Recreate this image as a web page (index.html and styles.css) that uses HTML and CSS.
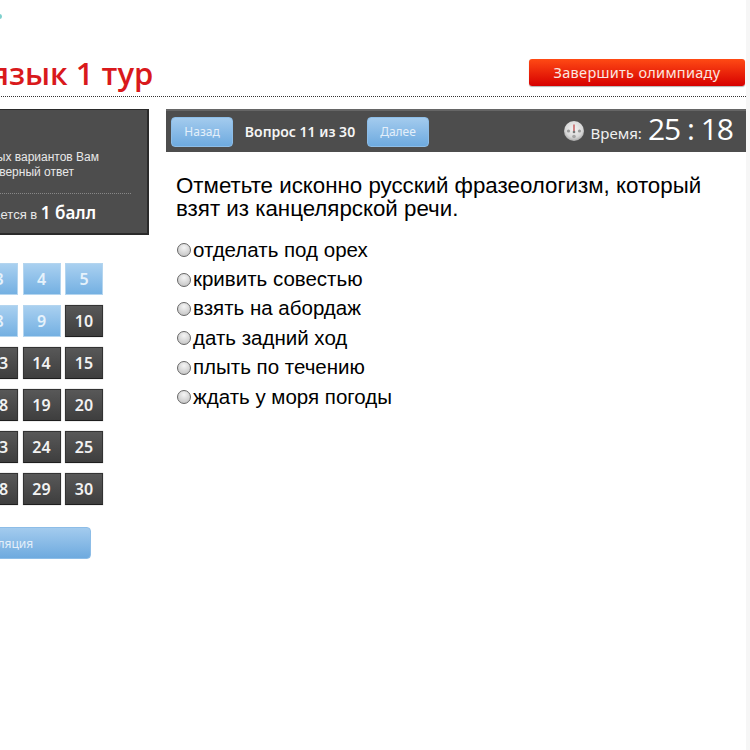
FILE: index.html
```html
<!DOCTYPE html>
<html lang="ru">
<head>
<meta charset="utf-8">
<title>Олимпиада</title>
<link rel="stylesheet" href="styles.css">
</head>
<body>
<div class="page">
  <div class="inner">
    <header class="header">
      <div class="logo-row"><span class="logo-mark"></span></div>
      <div class="title-row">
        <h1 class="title">Русский язык 1 тур</h1>
        <a class="finish">Завершить олимпиаду</a>
      </div>
    </header>
    <div class="columns">
      <aside class="sidebar">
        <div class="info">
          <p class="info-line line-a">Из предложенных вариантов Вам</p>
          <p class="info-line line-b">нужно выбрать один верный ответ</p>
          <div class="info-rule"></div>
          <p class="score">Вопрос оценивается в <b>1 балл</b></p>
        </div>
        <div class="grid">
          <a class="cell done">1</a><a class="cell done">2</a><a class="cell done">3</a><a class="cell done">4</a><a class="cell done">5</a>
          <a class="cell done">6</a><a class="cell done">7</a><a class="cell done">8</a><a class="cell done">9</a><a class="cell">10</a>
          <a class="cell">11</a><a class="cell">12</a><a class="cell">13</a><a class="cell">14</a><a class="cell">15</a>
          <a class="cell">16</a><a class="cell">17</a><a class="cell">18</a><a class="cell">19</a><a class="cell">20</a>
          <a class="cell">21</a><a class="cell">22</a><a class="cell">23</a><a class="cell">24</a><a class="cell">25</a>
          <a class="cell">26</a><a class="cell">27</a><a class="cell">28</a><a class="cell">29</a><a class="cell">30</a>
        </div>
        <a class="btn appeal">Апелляция</a>
      </aside>
      <main class="main">
        <div class="bar">
          <a class="btn nav">Назад</a>
          <span class="counter">Вопрос 11 из 30</span>
          <a class="btn nav">Далее</a>
          <div class="timer">
            <svg class="clock" viewBox="0 0 20 20" width="20" height="20" aria-hidden="true">
              <defs><radialGradient id="face" cx="50%" cy="40%" r="60%"><stop offset="0" stop-color="#f4f4f4"/><stop offset="0.7" stop-color="#d8d8d8"/><stop offset="1" stop-color="#a8a8a8"/></radialGradient></defs>
              <circle cx="10" cy="10" r="10" fill="url(#face)"/>
              <circle cx="4.5" cy="10" r="1.6" fill="#9a9a9a"/>
              <circle cx="15.5" cy="10" r="1.6" fill="#9a9a9a"/>
              <circle cx="10" cy="15.5" r="1.8" fill="#a5a5a5"/>
              <path d="M10 3.5V10" stroke="#c9686a" stroke-width="1.6" fill="none"/>
              <circle cx="10" cy="11" r="1.3" fill="#777"/>
            </svg>
            <span class="time-label">Время:</span>
            <span class="time-value">25 : 18</span>
          </div>
        </div>
        <div class="question">
          <p class="question-text">Отметьте исконно русский фразеологизм, который взят из канцелярской речи.</p>
          <ul class="answers">
            <li class="answer"><span class="radio"></span>отделать под орех</li>
            <li class="answer"><span class="radio"></span>кривить совестью</li>
            <li class="answer"><span class="radio"></span>взять на абордаж</li>
            <li class="answer"><span class="radio"></span>дать задний ход</li>
            <li class="answer"><span class="radio"></span>плыть по течению</li>
            <li class="answer"><span class="radio"></span>ждать у моря погоды</li>
          </ul>
        </div>
      </main>
    </div>
  </div>
  <div class="scrollbar"></div>
</div>
</body>
</html>
```
FILE: styles.css
```css
* { box-sizing: border-box; }
html, body { margin: 0; padding: 0; height: 100%; background: #fff; overflow: hidden; }
body { font-family: "Liberation Sans", Arial, sans-serif; color: #000; }
p, h1, ul { margin: 0; padding: 0; }

.page { display: flex; width: 750px; height: 750px; overflow: hidden; }
.inner { flex: 0 0 866px; min-width: 0; margin-left: -120px; }
.scrollbar { flex: 0 0 4px; background: #f6f6f6; }

.header { height: 97px; border-bottom: 1px dotted #333; padding-top: 14px; }
.logo-row { height: 45px; padding-left: 118px; }
.logo-mark { display: block; width: 4px; height: 5px; background: #5cc4c0; border-radius: 0 3px 3px 0; opacity: .8; }
.title-row { display: flex; justify-content: space-between; align-items: flex-start; padding-right: 1px; }
.title { font-family: "Open Sans", "Noto Sans", sans-serif; font-size: 31px; line-height: 32px; font-weight: 600; color: #d9191c; white-space: nowrap; margin: -2px 0 0 -23px; }
.finish { width: 216px; height: 27px; line-height: 27px; text-align: center; color: #fbe6e0; font-family: "Noto Sans", sans-serif; font-size: 14.5px; letter-spacing: .3px; border-radius: 3px; background: linear-gradient(#ff4a14, #d60000); box-shadow: 0 1px 1px rgba(0,0,0,.3); }

.columns { display: flex; gap: 17px; padding-top: 12px; }
.sidebar { flex: 0 0 269px; min-width: 0; }
.info { height: 126px; background: #4d4d4d; border: 1px solid #2a2a2a; border-width: 1px 2px 2px 1px; padding: 40px 0 0; color: #e8e8e8; text-align: right; overflow: hidden; }
.info-line { font-size: 12px; line-height: 15px; white-space: nowrap; }
.line-a { padding-right: 48px; }
.line-b { padding-right: 73px; }
.info-rule { margin: 13px 16px 0 0; border-top: 1px dotted #888; }
.score { margin-top: 9px; padding-right: 51px; font-size: 13px; line-height: 20px; white-space: nowrap; }
.score b { font-family: "Noto Sans", sans-serif; font-size: 17px; font-weight: 600; color: #fff; }

.grid { display: grid; grid-template-columns: repeat(5, 38px); grid-auto-rows: 32px; column-gap: 4.5px; row-gap: 10px; margin: 28px 0 0 15px; }
.cell { display: flex; align-items: center; justify-content: center; font-family: "Noto Sans", sans-serif; font-size: 16px; font-weight: 600; color: #f2f2f2; background: linear-gradient(#585858, #3e3e3e); border: 1px solid #333; border-bottom-color: #1e1e1e; box-shadow: 0 0 1px #999; }
.cell.done { color: #e6f2fb; background: linear-gradient(#a9d0f0, #74b0e2); border-color: #b4d5ef; box-shadow: none; }

.btn { display: flex; align-items: center; justify-content: center; font-family: "Noto Sans", sans-serif; font-size: 12px; color: #e3effa; background: linear-gradient(#a3cbee, #6eaadf); border: 1px solid #8dbde7; border-radius: 4px; }
.appeal { width: 180px; height: 32px; margin: 22px 0 0 31px; }

.main { flex: 0 0 580px; min-width: 0; }
.bar { display: flex; align-items: center; height: 43px; background: #4d4d4d; border-top: 2px solid #666; padding: 0 13px 0 5px; }
.nav { width: 62px; height: 30px; }
.counter { width: 134px; text-align: center; font-family: "Noto Sans", sans-serif; font-size: 14px; font-weight: 600; color: #f5f5f5; white-space: nowrap; }
.timer { margin-left: auto; display: flex; align-items: center; color: #f0f0f0; }
.clock { margin: 0 7px 2px 0; }
.time-label { font-family: "Noto Sans", sans-serif; font-size: 15px; margin-top: 2px; margin-right: 6px; }
.time-value { font-family: "Open Sans", sans-serif; font-size: 30px; line-height: 36px; font-weight: 400; letter-spacing: -1px; color: #fff; margin-bottom: 5px; }

.question { padding: 22px 10px 0; }
.question-text { font-size: 22.3px; line-height: 23px; width: 540px; }
.answers { list-style: none; margin-top: 15px; }
.answer { display: flex; align-items: center; height: 29.4px; font-size: 20.5px; }
.radio { flex: 0 0 14px; height: 14px; margin: 1px 2px 0 1px; border-radius: 50%; border: 1px solid #666; background: radial-gradient(circle at 50% 30%, #f5f5f5, #bdbdbd); }
```
